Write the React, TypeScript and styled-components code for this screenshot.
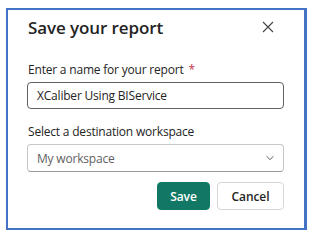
import React from "react";
import styled, { createGlobalStyle } from "styled-components";

const GlobalStyle = createGlobalStyle`
  html, body {
    margin: 0;
    padding: 0;
    background: #ffffff;
  }
  body {
    font-family: "Open Sans", "Noto Sans", sans-serif;
    color: #242424;
  }
`;

const Frame = styled.div`
  box-sizing: border-box;
  width: 301px;
  height: 222px;
  margin: 8px 0 0 6px;
  border: 2px solid #4472c4;
  border-right-width: 3px;
  background: #ffffff;
  padding: 3px 20px 0 19px;
`;

const Header = styled.div`
  display: flex;
  align-items: center;
  justify-content: space-between;
  height: 28px;
  padding-left: 1px;
  margin-bottom: 21px;
`;

const Title = styled.h1`
  margin: 0;
  font-size: 17px;
  font-weight: 600;
  letter-spacing: -0.1px;
  color: #242424;
`;

const CloseButton = styled.button`
  display: flex;
  align-items: center;
  justify-content: center;
  width: 20px;
  height: 20px;
  margin-right: 6px;
  padding: 0;
  border: none;
  background: none;
  color: #424242;
`;

const Field = styled.div`
  display: flex;
  flex-direction: column;
  gap: 4px;

  & + & {
    margin-top: 15px;
  }
`;

const Label = styled.label`
  font-size: 12px;
  line-height: 16px;
  letter-spacing: -0.2px;
  color: #242424;
  padding-left: 1px;
`;

const Required = styled.span`
  color: #c4314b;
  margin-left: 5px;
`;

const TextInput = styled.div`
  box-sizing: border-box;
  height: 27px;
  display: flex;
  align-items: center;
  padding: 0 9px;
  border: 1px solid #616161;
  border-radius: 4px;
  font-size: 12px;
  letter-spacing: -0.2px;
  color: #242424;
`;

const Select = styled.div`
  box-sizing: border-box;
  height: 28px;
  display: flex;
  align-items: center;
  justify-content: space-between;
  padding: 0 8px 0 9px;
  border: 1px solid #c7c7c7;
  border-bottom-color: #9a9a9a;
  border-radius: 4px;
  font-size: 12px;
  letter-spacing: -0.2px;
  color: #616161;
`;

const Actions = styled.div`
  display: flex;
  justify-content: flex-end;
  gap: 7px;
  margin-top: 10px;
`;

const Button = styled.button<{ $primary?: boolean }>`
  box-sizing: border-box;
  height: 28px;
  padding: 0;
  width: ${({ $primary }) => ($primary ? "53px" : "67px")};
  border-radius: 4px;
  border: 1px solid ${({ $primary }) => ($primary ? "#117865" : "#d6d6d6")};
  background: ${({ $primary }) => ($primary ? "#117865" : "#ffffff")};
  color: ${({ $primary }) => ($primary ? "#ffffff" : "#242424")};
  font-family: "Open Sans", "Noto Sans", sans-serif;
  font-size: 12px;
  font-weight: 600;
  letter-spacing: -0.1px;
`;

export default function App() {
  return (
    <>
      <GlobalStyle />
      <Frame>
        <Header>
          <Title>Save your report</Title>
          <CloseButton aria-label="Close">
            <svg width="12" height="12" viewBox="0 0 12 12">
              <path d="M1 1L11 11M11 1L1 11" stroke="currentColor" strokeWidth="1.1" />
            </svg>
          </CloseButton>
        </Header>
        <Field>
          <Label>
            Enter a name for your report<Required>*</Required>
          </Label>
          <TextInput>XCaliber Using BIService</TextInput>
        </Field>
        <Field>
          <Label>Select a destination workspace</Label>
          <Select>
            My workspace
            <svg width="10" height="6" viewBox="0 0 10 6">
              <path d="M1.5 1.2L5 4.6L8.5 1.2" fill="none" stroke="#616161" strokeWidth="1" />
            </svg>
          </Select>
        </Field>
        <Actions>
          <Button $primary>Save</Button>
          <Button>Cancel</Button>
        </Actions>
      </Frame>
    </>
  );
}
